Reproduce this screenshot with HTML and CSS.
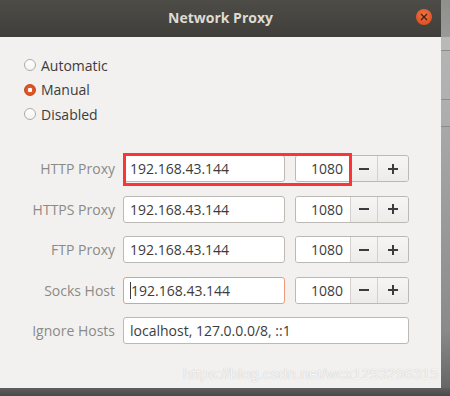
FILE: index.html
```html
<!DOCTYPE html>
<html lang="en">
<head>
    <meta charset="UTF-8">
    <title>Network Proxy</title>
    <link rel="stylesheet" href="styles.css">
</head>
<body>
    <div class="desktop">
        <div class="window">
            <div class="titlebar">
                <span class="title">Network Proxy</span>
                <span class="close">
                    <svg width="8" height="8" viewBox="0 0 8 8"><path d="M1 1 L7 7 M7 1 L1 7" stroke="#3a2418" stroke-width="1.3"/></svg>
                </span>
            </div>

            <div class="body">
                <div class="modes">
                    <div class="mode"><span class="radio"></span>Automatic</div>
                    <div class="mode"><span class="radio checked"></span>Manual</div>
                    <div class="mode"><span class="radio"></span>Disabled</div>
                </div>

                <div class="rows">
                    <div class="row">
                        <label class="name">HTTP Proxy</label>
                        <div class="entry">192.168.43.144</div>
                        <div class="spin">
                            <div class="port">1080</div>
                            <div class="btn"><svg width="10" height="10"><path d="M0 5 H10" stroke="#3c3c3c" stroke-width="2"/></svg></div>
                            <div class="btn"><svg width="10" height="10"><path d="M0 5 H10 M5 0 V10" stroke="#3c3c3c" stroke-width="2"/></svg></div>
                        </div>
                        <div class="mark"></div>
                    </div>
                    <div class="row">
                        <label class="name">HTTPS Proxy</label>
                        <div class="entry">192.168.43.144</div>
                        <div class="spin">
                            <div class="port">1080</div>
                            <div class="btn"><svg width="10" height="10"><path d="M0 5 H10" stroke="#3c3c3c" stroke-width="2"/></svg></div>
                            <div class="btn"><svg width="10" height="10"><path d="M0 5 H10 M5 0 V10" stroke="#3c3c3c" stroke-width="2"/></svg></div>
                        </div>
                    </div>
                    <div class="row">
                        <label class="name">FTP Proxy</label>
                        <div class="entry">192.168.43.144</div>
                        <div class="spin">
                            <div class="port">1080</div>
                            <div class="btn"><svg width="10" height="10"><path d="M0 5 H10" stroke="#3c3c3c" stroke-width="2"/></svg></div>
                            <div class="btn"><svg width="10" height="10"><path d="M0 5 H10 M5 0 V10" stroke="#3c3c3c" stroke-width="2"/></svg></div>
                        </div>
                    </div>
                    <div class="row">
                        <label class="name">Socks Host</label>
                        <div class="entry focus"><span class="caret"></span>192.168.43.144</div>
                        <div class="spin">
                            <div class="port">1080</div>
                            <div class="btn"><svg width="10" height="10"><path d="M0 5 H10" stroke="#3c3c3c" stroke-width="2"/></svg></div>
                            <div class="btn"><svg width="10" height="10"><path d="M0 5 H10 M5 0 V10" stroke="#3c3c3c" stroke-width="2"/></svg></div>
                        </div>
                    </div>
                    <div class="row">
                        <label class="name">Ignore Hosts</label>
                        <div class="entry wide">localhost, 127.0.0.0/8, ::1</div>
                    </div>
                </div>

                <div class="watermark">https://blog.csdn.net/wcx1293296315</div>
            </div>
        </div>
        <div class="side"></div>
    </div>
    <div class="bottom"></div>
</body>
</html>
```

FILE: styles.css
```css
body {
    margin: 0;
    padding: 0;
    width: 450px;
    height: 396px;
    overflow: hidden;
    background-color: #4e4e4e;
    font-family: "Open Sans", "Noto Sans", sans-serif;
    font-size: 14px;
}

.desktop {
    display: flex;
    height: 388px;
}

.window {
    width: 441px;
    display: flex;
    flex-direction: column;
    background-color: #f2f1f0;
}

.side {
    flex-grow: 1;
    background: linear-gradient(to bottom,
        #8f8f8c 0, #9a9a98 37px,
        #b9b9b8 37px, #b9b9b8 50px, #8c8c8c 50px, #8c8c8c 51px,
        #b4b4b4 51px, #b0b0b0 99px, #8c8c8c 99px, #8c8c8c 100px,
        #afafaf 100px, #acacac 126px, #8c8c8c 126px, #8c8c8c 127px,
        #a8a8a8 127px, #8a8a8a 330px, #666666 388px);
}

.bottom {
    height: 8px;
    background: linear-gradient(to bottom, #5e5e5e, #4a4a4a);
}

/* barra de título */
.titlebar {
    height: 37px;
    display: flex;
    align-items: center;
    justify-content: center;
    position: relative;
    background: linear-gradient(to bottom, #4d4c47, #3f3e3a);
    box-sizing: border-box;
    padding-bottom: 3px;
}

.title {
    color: #dfdbd2;
    font-weight: bold;
    font-size: 14px;
}

.close {
    position: absolute;
    left: 416px;
    top: 9px;
    width: 16px;
    height: 16px;
    border-radius: 50%;
    background: radial-gradient(circle at 50% 35%, #f0713f, #d9481c);
    display: flex;
    align-items: center;
    justify-content: center;
}

.close svg {
    display: block;
}

.body {
    flex-grow: 1;
    display: flex;
    flex-direction: column;
    position: relative;
}

/* opções de modo */
.modes {
    padding: 16px 0 0 24px;
    display: flex;
    flex-direction: column;
}

.mode {
    height: 24.5px;
    display: flex;
    align-items: center;
    color: #3c3c3c;
}

.radio {
    width: 12px;
    height: 12px;
    box-sizing: border-box;
    border-radius: 50%;
    border: 1px solid #aeaba6;
    background: linear-gradient(to bottom, #ffffff, #f4f3f2);
    margin-right: 5px;
}

.radio.checked {
    border-color: #c44a1e;
    background: radial-gradient(circle, #ffffff 0, #ffffff 2px, #e2592a 2.5px, #d5491c 100%);
}

/* linhas do formulário */
.rows {
    margin-top: 28.5px;
    display: flex;
    flex-direction: column;
    gap: 13.5px;
}

.row {
    height: 27px;
    display: flex;
    align-items: center;
    position: relative;
}

.name {
    width: 123px;
    padding-right: 8px;
    box-sizing: border-box;
    text-align: right;
    color: #8b8b86;
}

.entry {
    width: 162px;
    height: 27px;
    box-sizing: border-box;
    border: 1px solid #bcb9b4;
    border-radius: 3px;
    background-color: #ffffff;
    color: #3c3c3c;
    padding-left: 6px;
    display: flex;
    align-items: center;
}

.entry.wide {
    width: 286px;
}

.entry.focus {
    border-color: #ec9c7c;
}

.caret {
    width: 1px;
    height: 17px;
    background-color: #3c3c3c;
    margin-right: 0;
}

.spin {
    margin-left: 10px;
    width: 114px;
    height: 27px;
    box-sizing: border-box;
    border: 1px solid #bcb9b4;
    border-radius: 3px;
    display: flex;
    overflow: hidden;
}

.port {
    width: 54px;
    background-color: #ffffff;
    color: #3c3c3c;
    display: flex;
    align-items: center;
    justify-content: flex-end;
    padding-right: 7px;
    box-sizing: border-box;
}

.btn {
    flex-grow: 1;
    display: flex;
    align-items: center;
    justify-content: center;
    border-left: 1px solid #d3d1cd;
    background: linear-gradient(to bottom, #f6f5f4, #edecea);
}

.btn svg {
    display: block;
}

.btn:last-child {
    flex-grow: 0;
    width: 30px;
}

/* marcação vermelha por cima do campo HTTP */
.mark {
    position: absolute;
    left: 123px;
    top: -2px;
    width: 229px;
    height: 33px;
    box-sizing: border-box;
    border: 3px solid #fb3535;
}

.watermark {
    position: absolute;
    right: 2px;
    bottom: 5px;
    font-family: "Liberation Sans", Arial, sans-serif;
    font-size: 15.5px;
    color: rgba(255, 255, 255, 0.85);
    text-shadow: 0 0 1px rgba(0, 0, 0, 0.25);
}
```
